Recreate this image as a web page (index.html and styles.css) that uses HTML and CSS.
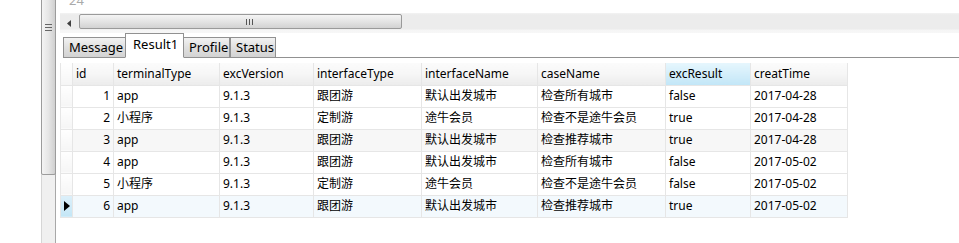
FILE: index.html
```html
<!DOCTYPE html>
<html>
<head>
<meta charset="utf-8">
<link rel="stylesheet" href="styles.css">
</head>
<body>
<div class="app">
  <div class="leftpane"></div>
  <div class="vscroll">
    <div class="vthumb">
      <span class="vgrip"></span>
    </div>
  </div>
  <div class="main">
    <div class="editor"><span class="lineno">24</span></div>
    <div class="hscroll">
      <svg class="harrow" width="6" height="8" viewBox="0 0 6 8"><polygon points="4,0 4,7 0,3.5" fill="#404040"/></svg>
      <div class="hthumb"><span class="hgrip"></span></div>
    </div>
    <div class="tabs">
      <div class="tab">Message</div>
      <div class="tab active">Result1</div>
      <div class="tab">Profile</div>
      <div class="tab">Status</div>
      <div class="tabfill"></div>
    </div>
    <table class="grid">
      <colgroup>
        <col class="c-rh"><col class="c-id"><col class="c-tt"><col class="c-ev"><col class="c-it"><col class="c-in"><col class="c-cn"><col class="c-er"><col class="c-ct">
      </colgroup>
      <thead>
        <tr>
          <th class="rh"></th><th>id</th><th>terminalType</th><th>excVersion</th><th>interfaceType</th><th>interfaceName</th><th>caseName</th><th class="sel">excResult</th><th>creatTime</th>
        </tr>
      </thead>
      <tbody>
        <tr><td class="rh"></td><td class="num">1</td><td>app</td><td>9.1.3</td><td>跟团游</td><td>默认出发城市</td><td>检查所有城市</td><td>false</td><td>2017-04-28</td></tr>
        <tr><td class="rh"></td><td class="num">2</td><td>小程序</td><td>9.1.3</td><td>定制游</td><td>途牛会员</td><td>检查不是途牛会员</td><td>true</td><td>2017-04-28</td></tr>
        <tr class="alt"><td class="rh"></td><td class="num">3</td><td>app</td><td>9.1.3</td><td>跟团游</td><td>默认出发城市</td><td>检查推荐城市</td><td>true</td><td>2017-04-28</td></tr>
        <tr><td class="rh"></td><td class="num">4</td><td>app</td><td>9.1.3</td><td>跟团游</td><td>默认出发城市</td><td>检查所有城市</td><td>false</td><td>2017-05-02</td></tr>
        <tr><td class="rh"></td><td class="num">5</td><td>小程序</td><td>9.1.3</td><td>定制游</td><td>途牛会员</td><td>检查不是途牛会员</td><td>false</td><td>2017-05-02</td></tr>
        <tr class="cur"><td class="rh"><svg width="6" height="10" viewBox="0 0 6 10"><polygon points="0,0 6,5 0,10" fill="#000"/></svg></td><td class="num">6</td><td>app</td><td>9.1.3</td><td>跟团游</td><td>默认出发城市</td><td>检查推荐城市</td><td>true</td><td>2017-05-02</td></tr>
      </tbody>
    </table>
  </div>
</div>
</body>
</html>
```
FILE: styles.css
```css
* { box-sizing: border-box; }
html, body { margin: 0; padding: 0; }
body {
  width: 959px;
  height: 243px;
  overflow: hidden;
  background: #fff;
  font-family: "Noto Sans", "Noto Sans CJK SC", sans-serif;
  font-size: 12px;
  color: #000;
}
.app { display: flex; height: 243px; }
.leftpane { width: 41px; background: #fff; }
.vscroll {
  width: 15px;
  background: #f0f0f0;
  border-left: 1px solid #d6d6d6;
  border-right: 1px solid #a8a8a8;
  position: relative;
}
.vthumb {
  height: 179px;
  margin-top: -4px;
  margin-left: -1px;
  width: 15px;
  border: 1px solid #9c9c9c;
  border-radius: 2px;
  background: linear-gradient(to right, #f4f4f4, #e6e6e6 50%, #d0d0d0);
  position: relative;
}
.vgrip {
  position: absolute;
  left: 3px;
  top: 27px;
  width: 7px;
  height: 7px;
  border-top: 1px solid #666;
  border-bottom: 1px solid #666;
}
.vgrip::after {
  content: "";
  position: absolute;
  left: 0;
  right: 0;
  top: 2px;
  border-top: 1px solid #666;
}
.main { flex: 1; padding-left: 4px; display: flex; flex-direction: column; }
.editor { height: 13px; overflow: hidden; position: relative; }
.lineno {
  display: block;
  margin-top: -8px;
  margin-left: 9px;
  font-size: 13px;
  color: #aaa;
  line-height: 16px;
}
.hscroll {
  height: 20px;
  background: linear-gradient(to bottom, #f3f3f3 0, #ececec 2px, #ececec 16px, #f5f5f5 17px, #f7f7f7 20px);
  display: flex;
  align-items: flex-start;
  padding-top: 1px;
}
.harrow { margin: 6px 0 0 7px; flex: none; }
.hthumb {
  margin-left: 6px;
  width: 323px;
  height: 15px;
  border: 1px solid #9a9a9a;
  border-radius: 2px;
  background: linear-gradient(to bottom, #f4f4f4, #e4e4e4 50%, #d2d2d2);
  position: relative;
}
.hgrip {
  position: absolute;
  left: 166px;
  top: 4px;
  width: 7px;
  height: 6px;
  border-left: 1px solid #555;
  border-right: 1px solid #555;
}
.hgrip::after {
  content: "";
  position: absolute;
  top: 0;
  bottom: 0;
  left: 2px;
  border-left: 1px solid #555;
}
.tabs {
  display: flex;
  align-items: flex-end;
  height: 25px;
  padding-left: 3px;
}
.tab {
  height: 21px;
  padding: 0 5px;
  border: 1px solid #919191;
  border-bottom: 1px solid #919191;
  background: linear-gradient(to bottom, #f2f2f2, #e0e0e0 50%, #d3d3d3);
  font-size: 13px;
  line-height: 19px;
  margin-right: -1px;
}
.tab:nth-child(1) { width: 63px; }
.tab:nth-child(3) { width: 47px; }
.tab:nth-child(4) { width: 46px; margin-left: 1px; }
.tab.active {
  width: 59px;
  height: 25px;
  background: #fff;
  border-bottom: 1px solid #fff;
  line-height: 21px;
  padding-left: 7px;
  position: relative;
  z-index: 1;
}
.tabfill { flex: 1; border-bottom: 1px solid #919191; height: 1px; }
.grid {
  margin-top: 5px;
  border-collapse: collapse;
  table-layout: fixed;
  width: 788px;
}
.c-rh { width: 12px; }
.c-id { width: 41px; }
.c-tt { width: 106px; }
.c-ev { width: 94px; }
.c-it { width: 108px; }
.c-in { width: 116px; }
.c-cn { width: 128px; }
.c-er { width: 85px; }
.c-ct { width: 97px; }
.grid th, .grid td {
  height: 22px;
  padding: 0 3px;
  border: 1px solid #e6e6e6;
  text-align: left;
  font-weight: normal;
  white-space: nowrap;
  overflow: hidden;
  line-height: 20px;
}
.grid th {
  background: linear-gradient(to bottom, #fbfbfb, #f6f6f6 50%, #ececec);
  border-top: none;
}
.grid th.sel { background: linear-gradient(to bottom, #e6f6fd, #d4eefa 50%, #c2e6f7); }
.grid td.num { text-align: right; }
.grid .rh {
  padding: 0;
  background: linear-gradient(to bottom, #ffffff, #f5f5f5);
}
.grid tr.alt td { background: #f7f7f7; }
.grid tr.alt td.rh { background: linear-gradient(to bottom, #ffffff, #f5f5f5); }
.grid tr.cur td { background: #f3f9fd; }
.grid tr.cur td.rh {
  background: linear-gradient(to bottom, #dcf0fa, #c4e6f6);
  text-align: center;
  vertical-align: middle;
}
.grid tr.cur td.rh svg { display: block; margin: 0 auto 0 3px; }
```
